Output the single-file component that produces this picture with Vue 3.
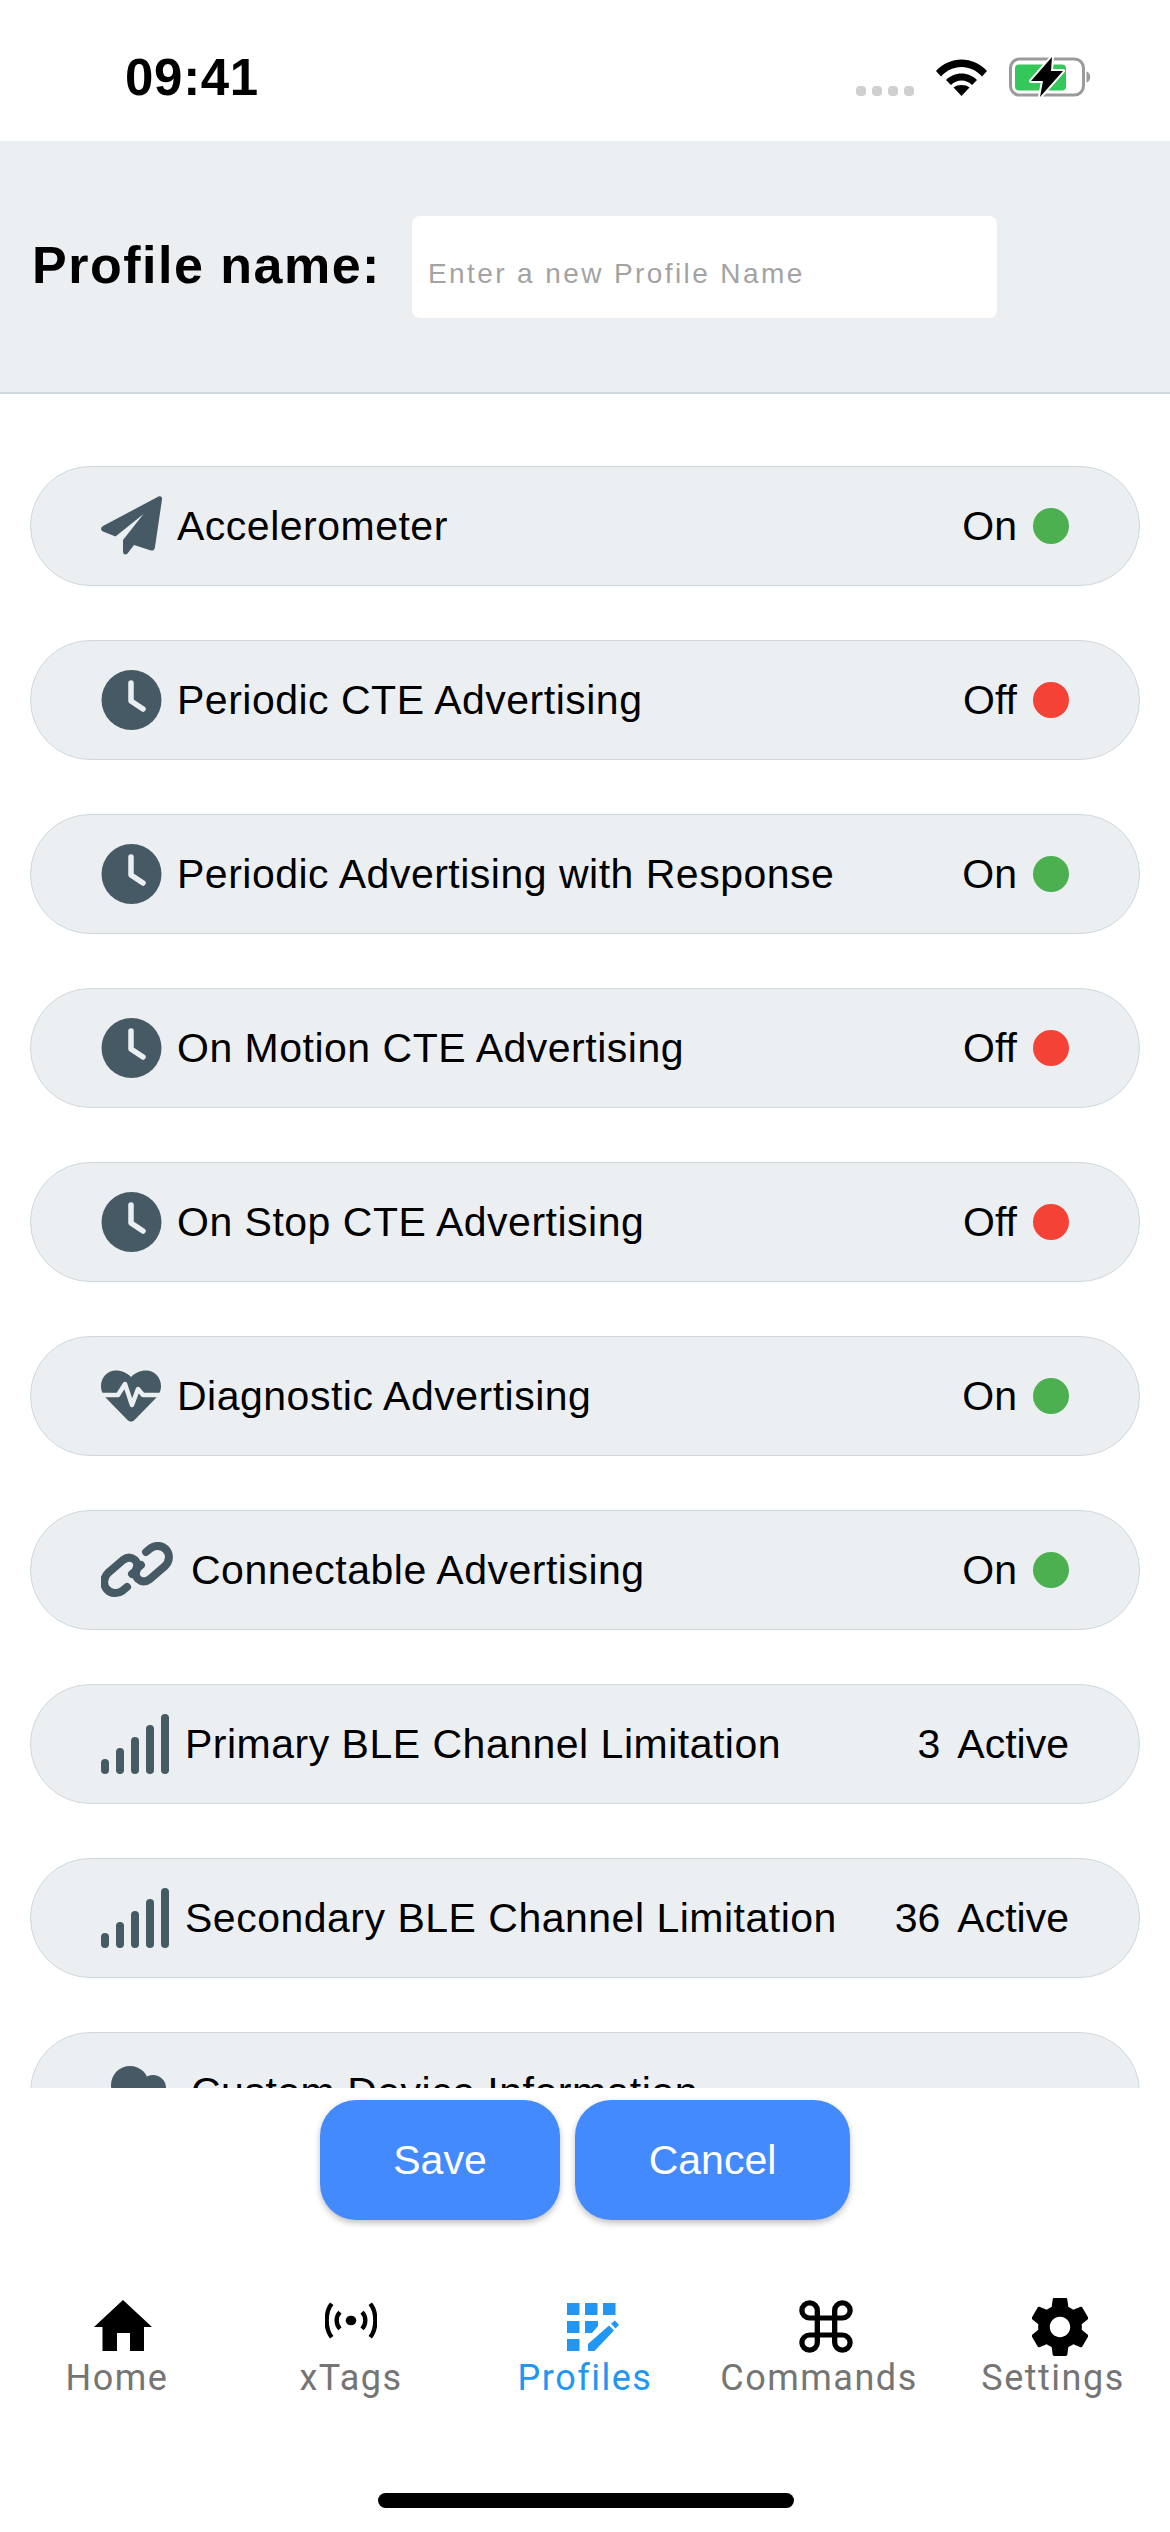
<script setup>
const rows = [
  { icon: 'plane', label: 'Accelerometer', state: 'On' },
  { icon: 'clock', label: 'Periodic CTE Advertising', state: 'Off' },
  { icon: 'clock', label: 'Periodic Advertising with Response', state: 'On' },
  { icon: 'clock', label: 'On Motion CTE Advertising', state: 'Off' },
  { icon: 'clock', label: 'On Stop CTE Advertising', state: 'Off' },
  { icon: 'heart', label: 'Diagnostic Advertising', state: 'On' },
  { icon: 'link', label: 'Connectable Advertising', state: 'On' },
  { icon: 'bars', label: 'Primary BLE Channel Limitation', count: 3 },
  { icon: 'bars', label: 'Secondary BLE Channel Limitation', count: 36 },
  { icon: 'cloud', label: 'Custom Device Information' }
]
const tabs = ['Home', 'xTags', 'Profiles', 'Commands', 'Settings']
</script>

<template>
  <div class="screen">
    <div class="status">
      <span class="time">09:41</span>
      <div class="status-icons">
        <span class="signal"><i></i><i></i><i></i><i></i></span>
        <svg class="wifi" width="51" height="37" viewBox="0 0 51 37">
          <path d="M0 12C7 4.500 16 .5 25.500 .5S44 4.500 51 12L46 17.500C40.500 11.500 33.500 8 25.500 8S10.500 11.500 5 17.500Z" fill="#000"/>
          <path d="M10 21C14 17 19.500 14.500 25.500 14.500S37 17 41 21L36 26C33 23.200 29.500 21.500 25.500 21.500S18 23.200 15 26Z" fill="#000"/>
          <path d="M17.500 28.500C19.500 26.800 22.500 26 25.500 26S31.500 26.800 33.500 28.500L25.500 37Z" fill="#000"/>
        </svg>
        <svg class="battery" width="84" height="42" viewBox="0 0 84 42">
          <rect x="1.500" y="3" width="73" height="36" rx="9" fill="none" stroke="#9b9b9b" stroke-width="3"/>
          <path d="M77.500 15.500C82.500 17 82.500 25 77.500 26.500Z" fill="#9b9b9b"/>
          <rect x="6" y="8.500" width="51" height="26" rx="4" fill="#34c759"/>
          <path d="M43 1 22 25H34L31 41 54 15H42Z" fill="#000" stroke="#fff" stroke-width="4" paint-order="stroke" stroke-linejoin="round"/>
        </svg>
      </div>
    </div>

    <header class="name-bar">
      <label class="name-label">Profile name:</label>
      <div class="name-input">Enter a new Profile Name</div>
    </header>

    <div class="list">
      <div v-for="row in rows" :key="row.label" class="pill">
        <svg v-if="row.icon === 'plane'" class="icon" width="62" height="62" viewBox="0 0 62 62" fill="#455a64">
          <path d="M57.500 1.500C60 .5 61.500 2 61 4.500L54 52C53.500 55 52 56 50 55.500L33 50 26.500 58.500C24.500 60.500 22 59.500 22 56.500V45L42.500 19 14.500 41.500 2 36.500C-.5 35.500 -.5 32.500 2 31Z"/>
        </svg>
        <svg v-else-if="row.icon === 'clock'" class="icon" width="62" height="62" viewBox="0 0 62 62">
          <circle cx="30.500" cy="31" r="30" fill="#455a64"/>
          <path d="M30 14V32L42 40" fill="none" stroke="#eceff1" stroke-width="5.500" stroke-linecap="round" stroke-linejoin="round"/>
        </svg>
        <svg v-else-if="row.icon === 'heart'" class="icon" width="62" height="62" viewBox="0 -5 62 62" fill="#455a64">
          <path d="M15 .5C21 .5 26 3 30 7 34 3 39 .5 45 .5 54 .5 60 8 60 16 60 22 57 26 54 29L33 50.500C31.300 52 28.700 52 27 50.500L6 29C3 26 0 22 0 16 0 8 6 .5 15 .5Z"/>
          <path d="M-2 25H17L24 14 31 35 37 19 42 25H62" fill="none" stroke="#eceff1" stroke-width="4.500" stroke-linejoin="round"/>
        </svg>
        <svg v-else-if="row.icon === 'link'" class="icon wide" width="72" height="56" viewBox="0 0 72 56" fill="none" stroke="#455a64" stroke-width="8" stroke-linecap="round">
          <path d="M31 32C36 29 38 22 34 18 30 14.500 26 15 22 18L7 31C2 36 2 43 6 47.500 10 52 17 52 21 49L26 45"/>
          <path d="M40 23C35 26 33 33 37 37 41 40.500 45 40 49 37L64 24C69 19 69 12 65 7.500 61 3 54 3 50 6L45 10"/>
        </svg>
        <svg v-else-if="row.icon === 'bars'" class="icon bars" width="68" height="60" viewBox="0 0 68 60" fill="#455a64">
          <rect x="0" y="45" width="8" height="15" rx="4"/>
          <rect x="15" y="34" width="8" height="26" rx="4"/>
          <rect x="30" y="23" width="8" height="37" rx="4"/>
          <rect x="45" y="11" width="8" height="49" rx="4"/>
          <rect x="60" y="0" width="8" height="60" rx="4"/>
        </svg>
        <svg v-else class="icon wide" width="72" height="56" viewBox="0 0 72 56" fill="#455a64">
          <circle cx="29" cy="21" r="19"/><circle cx="52" cy="24" r="13"/><rect x="8" y="26" width="56" height="28" rx="13"/>
        </svg>
        <span class="label">{{ row.label }}</span>
        <span v-if="row.count !== undefined" class="value"><span class="count">{{ row.count }}</span>Active</span>
        <span v-else-if="row.state" class="value">{{ row.state }}<i class="dot" :class="row.state === 'On' ? 'on' : 'off'"></i></span>
      </div>
    </div>

    <div class="actions">
      <button class="btn save">Save</button>
      <button class="btn cancel">Cancel</button>
    </div>

    <nav class="tabs">
      <div v-for="tab in tabs" :key="tab" class="tab" :class="{ active: tab === 'Profiles' }">
        <svg v-if="tab === 'Home'" class="home-i" width="58" height="51" viewBox="0 0 58 51" fill="#000">
          <path d="M29 0 58 27H50V51H36V33H23V51H8.500V27H0Z"/>
        </svg>
        <svg v-else-if="tab === 'xTags'" class="tags-i" width="52" height="37" viewBox="0 0 54 42" preserveAspectRatio="none" fill="none" stroke="#000" stroke-width="4.500">
          <circle cx="27" cy="21" r="5.500" fill="#000" stroke="none"/>
          <path d="M15.500 11.500C11 16.500 11 25.500 15.500 30.500M38.500 11.500C43 16.500 43 25.500 38.500 30.500"/>
          <path d="M7 2C0 11 0 31 7 40M47 2C54 11 54 31 47 40"/>
        </svg>
        <svg v-else-if="tab === 'Profiles'" class="prof-i" width="52" height="48" viewBox="0 0 52 48" fill="#2196f3">
          <rect x="0" y="0" width="12.500" height="12"/><rect x="18" y="0" width="12.500" height="12"/><rect x="36" y="0" width="12.500" height="12"/>
          <rect x="0" y="18" width="12.500" height="12"/><path d="M18 18H31V23L25 30H18Z"/><rect x="0" y="36" width="12.500" height="12"/>
          <path d="M21 41 42 22.500 47 27.500 27.500 48H21Z"/><path d="M44 20.500 48 17.500 52 22 48.500 25.500Z"/>
        </svg>
        <svg v-else-if="tab === 'Commands'" class="cmd-i" width="54" height="53" viewBox="0 0 56 56" preserveAspectRatio="none" fill="none" stroke="#000" stroke-width="5.500">
          <path d="M19 19H37V37H19ZM19 19V11A8 8 0 1 0 11 19H19ZM37 19V11A8 8 0 1 1 45 19H37ZM19 37V45A8 8 0 1 1 11 37H19ZM37 37V45A8 8 0 1 0 45 37H37Z"/>
        </svg>
        <svg v-else class="gear-i" width="56" height="58" viewBox="2.400 2 19.200 20" preserveAspectRatio="none" fill="#000">
          <path d="M19.430 12.980c.04-.32.07-.64.07-.98s-.03-.66-.07-.98l2.110-1.650c.19-.15.24-.42.12-.64l-2-3.460c-.12-.22-.39-.3-.61-.22l-2.490 1c-.52-.4-1.080-.73-1.690-.98l-.38-2.650C14.460 2.180 14.250 2 14 2h-4c-.25 0-.46.18-.49.420l-.38 2.650c-.61.25-1.170.59-1.690.98l-2.490-1c-.23-.09-.49 0-.61.22l-2 3.460c-.13.220-.07.49.12.64l2.110 1.650c-.04.32-.07.65-.07.98s.03.66.07.98l-2.110 1.650c-.19.15-.24.42-.12.64l2 3.460c.12.22.39.3.61.22l2.490-1c.52.4 1.080.73 1.690.98l.38 2.650c.03.24.24.42.49.42h4c.25 0 .46-.18.49-.42l.38-2.650c.61-.25 1.170-.59 1.690-.98l2.490 1c.23.09.49 0 .61-.22l2-3.460c.12-.22.07-.49-.12-.64l-2.110-1.650zM12 15.500c-1.930 0-3.500-1.570-3.500-3.500s1.570-3.500 3.500-3.500 3.500 1.570 3.500 3.500-1.570 3.500-3.500 3.500z"/>
        </svg>
        <span class="tab-label">{{ tab }}</span>
      </div>
    </nav>
    <div class="home-bar"><span></span></div>
  </div>
</template>

<style>
html, body { margin: 0; background: #fff; }
</style>

<style scoped>
.screen {
  width: 1170px;
  height: 2532px;
  display: flex;
  flex-direction: column;
  overflow: hidden;
  background: #fff;
  font-family: "Liberation Sans", Arial, sans-serif;
  color: #000;
}
.status {
  height: 141px;
  flex: none;
  display: flex;
  justify-content: space-between;
  align-items: flex-start;
  padding: 0 77px 0 125px;
  box-sizing: border-box;
}
.time { font-size: 51px; font-weight: 700; line-height: 60px; margin-top: 48px; letter-spacing: .7px; }
.status-icons { display: flex; align-items: flex-start; margin-top: 56px; }
.signal { display: flex; gap: 6px; margin-top: 30px; margin-right: 22px; }
.signal i { width: 10px; height: 10px; border-radius: 4px; background: #cfcfcf; }
.wifi { margin-top: 3px; margin-right: 22px; }
.name-bar {
  height: 253px;
  flex: none;
  box-sizing: border-box;
  background: #eceff1;
  border-bottom: 2px solid #cfd8dc;
  display: flex;
  align-items: center;
  padding: 0 0 0 32px;
}
.name-label { font-size: 52px; font-weight: 700; width: 380px; letter-spacing: 1.500px; margin-top: -3px; }
.name-input {
  width: 585px;
  height: 102px;
  box-sizing: border-box;
  background: #fff;
  border-radius: 8px;
  padding: 41px 16px 0;
  font-size: 28px;
  line-height: 34px;
  letter-spacing: 2.400px;
  color: #a3a3a3;
}
.list {
  flex: 1;
  min-height: 0;
  overflow: hidden;
  padding: 72px 30px 0;
}
.pill {
  height: 120px;
  box-sizing: border-box;
  margin-bottom: 54px;
  background: #eceff1;
  border: 1.500px solid #cfd8dc;
  border-radius: 60px;
  display: flex;
  align-items: center;
  padding: 0 70px;
}
.icon { flex: none; margin-right: 14px; }
.icon.wide { margin-right: 18px; }
.icon.bars { margin-right: 16px; }
.label { font-size: 41px; flex: 1; white-space: nowrap; letter-spacing: .5px; }
.value { font-size: 41px; display: flex; align-items: center; white-space: nowrap; }
.count { margin-right: 17px; }
.dot { width: 36px; height: 36px; border-radius: 50%; margin-left: 16px; }
.dot.on { background: #4caf50; }
.dot.off { background: #f44336; }
.actions {
  height: 187px;
  flex: none;
  display: flex;
  justify-content: center;
  align-items: flex-start;
  gap: 15px;
  padding-top: 12px;
  box-sizing: border-box;
}
.btn {
  height: 120px;
  border: 0;
  border-radius: 36px;
  background: #448aff;
  color: #fff;
  font-family: "Liberation Sans", Arial, sans-serif;
  font-size: 41px;
  box-shadow: 0 3px 6px rgba(0,0,0,.25);
}
.save { width: 240px; }
.cancel { width: 275px; }
.tabs {
  flex: none;
  height: 218px;
  box-sizing: border-box;
  padding: 23px 0 0;
  display: flex;
}
.tab { width: 234px; display: flex; flex-direction: column; align-items: center; }
.tab svg { flex: none; margin-left: 12px; }
.tab .home-i { margin-top: 2px; margin-bottom: 5px; }
.tab .tags-i { margin-left: 0; margin-top: 4px; margin-bottom: 17px; }
.tab .prof-i { margin-left: 15px; margin-top: 5px; margin-bottom: 5px; }
.tab .cmd-i { margin-left: 14px; margin-top: 2px; margin-bottom: 3px; }
.tab .gear-i { margin-left: 14px; }
.tab-label {
  font-family: Roboto, sans-serif;
  font-size: 36px;
  letter-spacing: 1.500px;
  line-height: 42px;
  color: #757575;
  margin-top: 1px;
}
.tab.active .tab-label { color: #2196f3; }
.home-bar { flex: none; height: 39px; position: relative; }
.home-bar span {
  position: absolute;
  left: 378px;
  top: 0;
  width: 416px;
  height: 15px;
  border-radius: 8px;
  background: #000;
}
</style>
